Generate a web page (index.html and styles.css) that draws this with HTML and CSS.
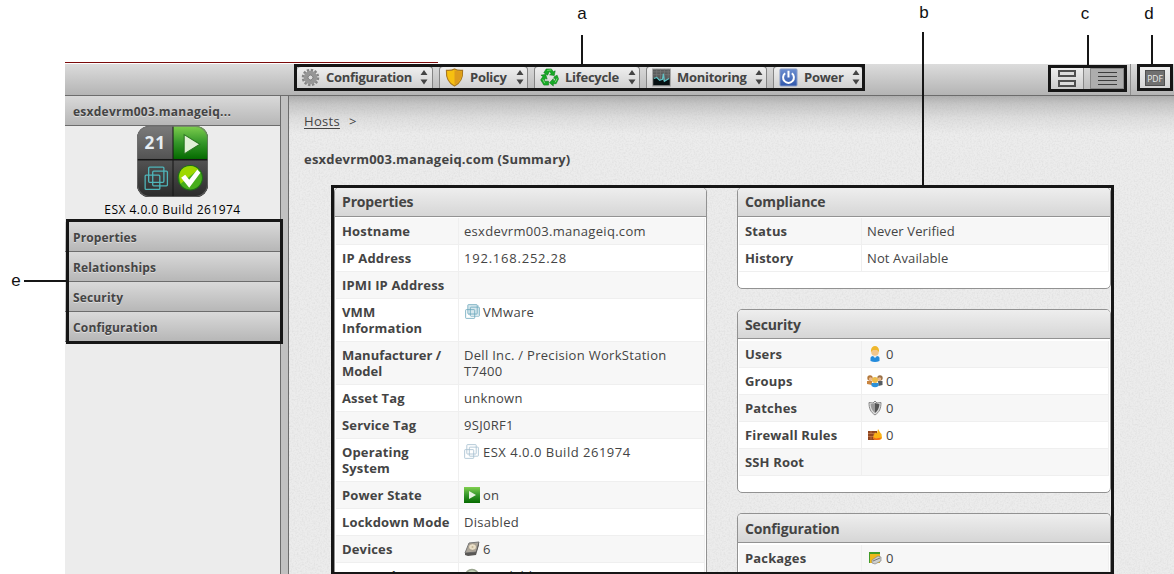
FILE: index.html
```html
<!DOCTYPE html>
<html lang="en">
<head>
<meta charset="utf-8">
<title>Host summary</title>
<link rel="stylesheet" href="styles.css">
</head>
<body>
<svg width="0" height="0" class="defs" aria-hidden="true">
  <defs>
    <linearGradient id="green" x1="0" y1="0" x2="0" y2="1"><stop offset="0" stop-color="#7fcf4e"/><stop offset=".5" stop-color="#35972a"/><stop offset="1" stop-color="#056b00"/></linearGradient>
    <linearGradient id="grey" x1="0" y1="0" x2="0" y2="1"><stop offset="0" stop-color="#7b7b7b"/><stop offset="1" stop-color="#535353"/></linearGradient>
    <linearGradient id="dark" x1="0" y1="0" x2="0" y2="1"><stop offset="0" stop-color="#525252"/><stop offset="1" stop-color="#2b2b2b"/></linearGradient>
    <linearGradient id="blue" x1="0" y1="0" x2="0" y2="1"><stop offset="0" stop-color="#6d8fd0"/><stop offset="1" stop-color="#2f57ac"/></linearGradient>
    <filter id="grain" x="0" y="0" width="100%" height="100%"><feTurbulence type="fractalNoise" baseFrequency=".6" numOctaves="2" seed="4"/><feColorMatrix values="0 0 0 0 .3  0 0 0 0 .3  0 0 0 0 .3  .9 0 0 0 -.36"/></filter>
    <clipPath id="quad"><rect width="70" height="70" rx="12"/></clipPath>
    <symbol id="boxes" viewBox="0 0 24 24"><g fill="none" stroke="currentColor" stroke-width="1.300"><rect x="1" y="9" width="14.500" height="14" rx="1"/><rect x="8.500" y="5" width="14.500" height="14.500" rx="1"/><rect x="4.500" y="1" width="15" height="15" rx="1"/></g></symbol>
    <symbol id="sort" viewBox="0 0 8 16"><path d="M4 1l3.500 5h-7zM4 15.500L.5 10.500h7z" fill="#444"/></symbol>
  </defs>
</svg>

<div class="app">
  <div class="redline"></div>
  <header class="topbar">
    <nav class="menus">
      <button class="menu m1"><svg class="ico" viewBox="0 0 20 20"><circle cx="10" cy="10" r="7.800" fill="none" stroke="#858585" stroke-width="2.800" stroke-dasharray="2.500 1.584"/><circle cx="10" cy="10" r="4.900" fill="none" stroke="#969696" stroke-width="4.400"/><circle cx="10" cy="10" r="2.600" fill="#ddd" stroke="#777"/></svg><span>Configuration</span><svg class="sort"><use href="#sort"/></svg></button>
      <button class="menu m2"><svg class="ico" viewBox="0 0 20 20"><path d="M10 1c2.500 1.500 5.500 1.700 8.500 1.500C19 10 16 16 10 19 4 16 1 10 1.500 2.500 4.500 2.700 7.500 2.500 10 1z" fill="#f6c010" stroke="#a9781f" stroke-width="1.200"/><path d="M10 2c2 1.200 5 1.600 7.700 1.500C18 9 16 15 10 18z" fill="#dd9c1c"/></svg><span>Policy</span><svg class="sort"><use href="#sort"/></svg></button>
      <button class="menu m3"><svg class="ico" viewBox="0 0 20 20"><g fill="#16aa26" stroke="#087a16" stroke-width=".6"><path d="M6.500 1H12l2 3 2-1-1 5-5-.8 1.700-1.200L10 3.500 8 7.500 4 5z"/><path d="M14.500 9.500l3.500-2 1.500 4-2.500 5h-3V19L10 15.500l4-4.300v2.300h1.500l.6-1.200z"/><path d="M1 7.500l5-.8 1.500 5-2-.8-1.200 3H9V18H4L.7 12.500 3 9z"/></g><path d="M7.500 2.500L12 2M3 12l2 4M16 15l2-4" stroke="#7fdc77" fill="none"/></svg><span>Lifecycle</span><svg class="sort"><use href="#sort"/></svg></button>
      <button class="menu m4"><svg class="ico" viewBox="0 0 20 20"><rect x=".5" y="1" width="19" height="18" fill="#5a5c5c" stroke="#aaa"/><path d="M1 7h18M1 4h18M5 1v12M9 1v12M13 1v12M17 1v12" stroke="#777" stroke-width=".8"/><path d="M1.500 11l3-1 3 3 3-1 2 2 6-3v7h-17z" fill="#071012"/><path d="M2 11l3-1 3 3 3-1 1-6 1 8 5-3" fill="none" stroke="#5fc3c7" stroke-width="1.200"/></svg><span>Monitoring</span><svg class="sort"><use href="#sort"/></svg></button>
      <button class="menu m5"><svg class="ico" viewBox="0 0 20 20"><rect x="1" y="1" width="18" height="18" rx="1" fill="url(#blue)" stroke="#8fa2ca"/><path d="M6.500 5.500a5.700 5.700 0 1 0 7 0M10 3v7" fill="none" stroke="#fff" stroke-width="2.100"/></svg><span>Power</span><svg class="sort"><use href="#sort"/></svg></button>
    </nav>
    <div class="views">
      <div class="view"><svg width="18" height="17" viewBox="0 0 18 17"><g fill="#ddd" stroke="#505050" stroke-width="2"><rect x="1" y="1" width="16" height="5"/><rect x="1" y="11" width="16" height="5"/></g></svg></div>
      <div class="view on"><svg width="19" height="13" viewBox="0 0 19 13"><path d="M0 .5h19M0 4.500h19M0 8.500h19M0 12.500h19" stroke="#3d3d3d"/></svg></div>
    </div>
    <div class="pdf"><span>PDF</span></div>
  </header>

  <div class="body">
    <aside class="sidebar">
      <h2 class="bar">esxdevrm003.manageiq...</h2>
      <div class="host">
        <svg class="quad" viewBox="0 0 70 70"><g clip-path="url(#quad)"><rect width="70" height="70" fill="#151515"/><rect width="35" height="32.500" fill="url(#grey)"/><rect x="36" width="34" height="32.500" fill="url(#green)"/><rect y="34" width="35" height="36" fill="url(#dark)"/><rect x="36" y="34" width="34" height="36" fill="url(#dark)"/><path d="M46.500 8.500L62 18 46.500 27.500z" fill="#e1f0d7" stroke="#28751e"/></g><rect x=".5" y=".5" width="69" height="69" rx="12" fill="none" stroke="#707070" stroke-opacity=".7"/><text x="18" y="22.500" text-anchor="middle" class="count">21</text><g class="cyan"><use href="#boxes" x="7" y="39.500" width="24" height="24"/></g><circle cx="52.500" cy="51" r="12" fill="#46ad1c" stroke="#1d7014"/><path d="M41.500 49a11 11 0 0 1 19-6L43 57z" fill="#9ed800"/><path d="M43.500 51l4-3 4 5 8-10 3 3-11 15z" fill="#fff"/></svg>
        <p class="build">ESX 4.0.0 Build 261974</p>
      </div>
      <ul class="sections">
        <li class="bar">Properties</li>
        <li class="bar">Relationships</li>
        <li class="bar">Security</li>
        <li class="bar">Configuration</li>
      </ul>
    </aside>
    <div class="splitter"></div>
    <main class="main">
      <svg class="texture"><rect width="100%" height="100%" filter="url(#grain)"/></svg>
      <p class="crumb"><a>Hosts</a><span>&gt;</span></p>
      <h1 class="title">esxdevrm003.manageiq.com (Summary)</h1>
      <div class="columns">
        <section class="panel first">
          <h3>Properties</h3>
          <dl>
            <div><dt>Hostname</dt><dd>esxdevrm003.manageiq.com</dd></div>
            <div><dt>IP Address</dt><dd class="num">192.168.252.28</dd></div>
            <div><dt>IPMI IP Address</dt><dd></dd></div>
            <div><dt>VMM<br>Information</dt><dd class="pic"><svg class="i teal" viewBox="0 0 16 16"><rect x="4" y="1" width="11" height="10" fill="#d7e8ee"/><use href="#boxes" x="1" y="0" width="15" height="15"/></svg>VMware</dd></div>
            <div><dt class="tight">Manufacturer /<br>Model</dt><dd>Dell Inc. / Precision WorkStation<br>T7400</dd></div>
            <div><dt>Asset Tag</dt><dd>unknown</dd></div>
            <div><dt>Service Tag</dt><dd>9SJ0RF1</dd></div>
            <div><dt>Operating<br>System</dt><dd class="pic build-no"><svg class="i pale" viewBox="0 0 16 16"><use href="#boxes" x="0" y="0" width="15" height="15"/></svg>ESX 4.0.0 Build 261974</dd></div>
            <div><dt>Power State</dt><dd class="pic"><svg class="i" viewBox="0 0 16 16"><rect width="16" height="16" fill="url(#green)"/><path d="M5 4l7 4-7 4z" fill="#e6f3df"/></svg>on</dd></div>
            <div><dt>Lockdown Mode</dt><dd>Disabled</dd></div>
            <div><dt>Devices</dt><dd class="pic"><svg class="i" viewBox="0 0 16 16"><path d="M5 2l10-1-3 10-11 1z" fill="#ada69b" stroke="#777"/><path d="M1 12l11-1 3-10v3l-3 10-8 1-3-1z" fill="#595755"/><ellipse cx="8.500" cy="6" rx="4" ry="3.300" fill="#eadfc8" stroke="#948b7d" stroke-width=".7"/><circle cx="8.500" cy="6" r="1" fill="#c5b798"/></svg>6</dd></div>
            <div><dt>Network</dt><dd class="pic"><svg class="i" viewBox="0 0 16 16"><circle cx="8" cy="8" r="6.500" fill="#c5d2b8" stroke="#9aa58f" stroke-width="1.500"/></svg>Available</dd></div>
          </dl>
        </section>
        <div class="stack">
          <section class="panel first">
            <h3>Compliance</h3>
            <dl>
              <div><dt>Status</dt><dd class="tight">Never Verified</dd></div>
              <div><dt>History</dt><dd class="tight">Not Available</dd></div>
            </dl>
          </section>
          <section class="panel">
            <h3>Security</h3>
            <dl>
              <div><dt>Users</dt><dd class="pic"><svg class="i" viewBox="0 0 16 16"><path d="M3.500 15v-3c0-3 9-3 9 0v3q-4.500 2-9 0z" fill="#238bdc"/><path d="M5 9l3 3 3-3z" fill="#eee"/><circle cx="8" cy="6" r="3.800" fill="#f2c68c"/><path d="M4 6c-1-8 9-8 8 0l-2-2H6z" fill="#efb72c"/></svg>0</dd></div>
              <div><dt>Groups</dt><dd class="pic"><svg class="i" viewBox="0 0 16 16"><path d="M0 11V8h5v4z" fill="#c98540"/><path d="M11 8h4.500v4l-4 1z" fill="#555c63"/><circle cx="3" cy="5" r="2.700" fill="#b5793b"/><circle cx="13" cy="5" r="2.700" fill="#9b7249"/><circle cx="3.500" cy="6" r="1.700" fill="#eab88b"/><circle cx="12.500" cy="6" r="1.700" fill="#eab88b"/><path d="M4.500 13v-3h7v3q-3.500 2.500-7 0z" fill="#2b91da"/><circle cx="8" cy="7" r="3" fill="#edbc4b"/></svg>0</dd></div>
              <div><dt>Patches</dt><dd class="pic"><svg class="i" viewBox="0 0 16 16"><path d="M8 1l2 2 4-.5c0 6-1.500 9.500-6 12.500-4.500-3-6-6.500-6-12.500L6 3z" fill="#dedede" stroke="#888"/><path d="M8 3l4.500 1.300C12 8 11 11 8 13z" fill="#555"/><path d="M8 3L3.500 4.300C4 8 5 11 8 13z" fill="#999"/></svg>0</dd></div>
              <div><dt>Firewall Rules</dt><dd class="pic"><svg class="i" viewBox="0 0 16 16"><path d="M1 4h9v9H1z" fill="#914721"/><path d="M1 6.500h9M1 9.500h9M4 4v2.500M7 6.500v3M4 9.500v3" stroke="#cc8250" stroke-width=".7"/><path d="M7 12.500c-2-2 0-4 1-7l2 1 1-4.500 2.500 4 1 1 .5 4c0 1-2 2-4 2z" fill="#fbb315"/><path d="M6 10l3 1.500 5.500-1q-1 2.500-4.500 2.500-4 0-4-3z" fill="#f2681a"/></svg>0</dd></div>
              <div><dt>SSH Root</dt><dd></dd></div>
            </dl>
          </section>
          <section class="panel open">
            <h3>Configuration</h3>
            <dl>
              <div><dt>Packages</dt><dd class="pic"><svg class="i" viewBox="0 0 16 16"><path d="M2 2h11v11H3z" fill="#efb91b"/><path d="M2 2h11v2H3v9H2z" fill="#429b28"/><path d="M5 10l6-4 3 1v4l-6 3-3-1z" fill="#d0d0cc" stroke="#888" stroke-width=".7"/><path d="M6 11l7-3" stroke="#777"/></svg>0</dd></div>
            </dl>
          </section>
        </div>
      </div>
    </main>
  </div>
</div>

<div class="frame fa"></div><div class="frame fb"></div><div class="frame fc"></div><div class="frame fd"></div><div class="frame fe"></div>
<div class="lead la"></div><div class="lead lb"></div><div class="lead lc"></div><div class="lead ld"></div><div class="lead le"></div>
<div class="tag ta">a</div><div class="tag tb">b</div><div class="tag tc">c</div><div class="tag td">d</div><div class="tag te">e</div>
</body>
</html>
```
FILE: styles.css
```css
* { box-sizing: border-box; margin: 0; padding: 0; }
html { overflow: hidden; }
body { position: relative; width: 1174px; height: 574px; overflow: hidden; background: #fff; color: #444; font: 13px/16px "Open Sans", "Noto Sans", sans-serif; }
.defs { position: absolute; }
.app { padding: 62px 0 0 65px; }
.redline { width: 373px; height: 2px; border-top: 1px solid #7a0a0a; }

.topbar { display: flex; height: 32px; padding-left: 232px; border-bottom: 1px solid #6c6c6c; background: linear-gradient(#dcdcdc, #b4b4b4); }
.menus { display: flex; gap: 6px; padding-top: 2px; height: 25px; width: 566px; }
.menu { display: flex; align-items: center; height: 23px; border: 1px solid #858585; border-width: 1px 1px 0; border-radius: 4px 4px 0 0; background: linear-gradient(#efefef, #cfcfcf); color: #444; font: bold 13px/20px "Open Sans", sans-serif; letter-spacing: -.28px; padding: 0 3px 2px 5px; }
.menu span { flex: 1; text-align: left; white-space: nowrap; }
.ico { width: 19px; height: 19px; margin-right: 6px; flex: none; }
.sort { width: 8px; height: 16px; flex: none; }
.m1 { width: 136px; padding-left: 4px; padding-right: 4px; border-left: 0; }
.m2 { width: 89px; }
.m3 { width: 106px; }
.m4 { width: 121px; }
.m5 { width: 90px; padding-right: 2px; }
.views { display: flex; margin-left: 188px; padding: 4px 0 0; width: 80px; height: 31px; border-right: 1px solid #8d8d8d; }
.view { display: flex; align-items: center; justify-content: center; width: 33px; height: 21px; background: linear-gradient(#eee, #ccc); border-right: 1px solid #888; }
.view.on { width: 34px; margin-left: 6px; background: #adadad; border: 1px solid #888; }
.pdf { display: flex; align-items: center; justify-content: center; width: 30px; height: 21px; margin: 3px 0 0 9px; background: linear-gradient(#eee, #d5d5d5); }
.pdf span { width: 20px; height: 16px; background: #707070; border: 1px solid #505050; color: #eee; font: 8.500px/15px "Open Sans", sans-serif; text-align: center; }

.body { display: flex; height: 478px; }
.sidebar { width: 215px; background: #ececec; }
.bar { height: 30px; padding: 0 8px; border-bottom: 1px solid #6c6c6c; background: linear-gradient(#d9d9d9, #b7b7b7); color: #444; font: bold 12px/31px "Open Sans", sans-serif; text-shadow: 0 1px 0 #ddd; list-style: none; letter-spacing: .15px; }
h2.bar { letter-spacing: .25px; }
.host { display: flex; flex-direction: column; align-items: center; height: 96px; }
.quad { width: 71px; height: 71px; }
.count { font: bold 17px "Open Sans", sans-serif; fill: #e6edf2; letter-spacing: .8px; }
.cyan { color: #4fb5b9; }
.build { margin-top: 5px; color: #000; font-size: 12px; letter-spacing: .47px; white-space: nowrap; }
.splitter { width: 9px; background: #c1c1c1; border: 1px solid #6c6c6c; border-width: 0 1px; }

.main { position: relative; flex: 1; overflow: hidden; padding: 17px 0 0 15px; background: linear-gradient(#aeaeae, #c6c6c6 8px, #dedede 22px, #ececec 38px, #ececec); }
.texture { position: absolute; left: 0; top: 0; width: 100%; height: 100%; opacity: .3; }
.main > :not(.texture) { position: relative; }
.crumb { display: flex; gap: 9px; height: 16px; letter-spacing: .3px; }
.crumb a { text-decoration: underline; text-underline-offset: 2px; }
.title { margin-top: 22px; font-size: 13px; line-height: 16px; height: 16px; letter-spacing: .2px; }
.columns { display: flex; gap: 30px; margin: 20px 0 0 30px; }
.panel { width: 373px; border: 1px solid #929292; border-radius: 5px; background: #fff; padding-bottom: 16px; }
.stack { display: flex; flex-direction: column; gap: 20px; }
.stack .panel { width: 374px; }
.panel h3 { height: 29px; padding-left: 7px; border-bottom: 1px solid #929292; border-radius: 4px 4px 0 0; background: linear-gradient(#eee, #d6d6d6); font: bold 14px/29px "Open Sans", sans-serif; letter-spacing: -.15px; }
.panel.first h3 { line-height: 27px; }
.panel dl { padding: 2px 1px 0; }
.panel.first dl { padding-top: 1px; }
.panel dl > div { display: grid; grid-template-columns: 123px 1fr; border-bottom: 1px solid #efefef; border-right: 1px solid #efefef; min-height: 27px; white-space: nowrap; }
.panel dl > div:nth-child(odd) { background: #f7f7f7; }
.panel dt { padding: 5px 0 5px 6px; border-right: 1px solid #efefef; font-weight: bold; letter-spacing: .15px; }
.panel dt.tight { letter-spacing: 0; }
.panel dd { padding: 5px 0 5px 5px; letter-spacing: .3px; }
.panel dd.tight { letter-spacing: .12px; }
.panel dd.num { letter-spacing: .78px; }
.panel dd.build-no { letter-spacing: .5px; }
.panel .pic { display: flex; gap: 3px; }
.panel.open { padding-bottom: 5px; border-bottom: 0; border-radius: 5px 5px 0 0; }
.i { width: 16px; height: 16px; flex: none; }
.teal { color: #6ba8bc; }
.pale { color: #a5bfd0; }

/* callouts laid over the window */
.frame { position: absolute; border: 3px solid #161616; }
.fa { left: 294px; top: 64px; width: 571px; height: 27px; }
.fb { left: 331px; top: 185px; width: 783px; height: 389px; border-bottom-width: 2px; }
.fc { left: 1048px; top: 65px; width: 79px; height: 27px; }
.fd { left: 1137px; top: 64px; width: 36px; height: 27px; }
.fe { left: 66px; top: 219px; width: 217px; height: 125px; }
.lead { position: absolute; width: 2px; background: #161616; }
.la { left: 581px; top: 35px; height: 30px; }
.lb { left: 922px; top: 32px; height: 154px; }
.lc { left: 1087px; top: 35px; height: 31px; }
.ld { left: 1151px; top: 35px; height: 30px; }
.le { left: 24px; top: 280px; width: 43px; height: 2px; }
.tag { position: absolute; width: 20px; text-align: center; color: #111; font: 17px/20px "Liberation Sans", sans-serif; }
.ta { left: 572px; top: 4px; }
.tb { left: 914px; top: 3px; }
.tc { left: 1075px; top: 4px; }
.td { left: 1139px; top: 4px; }
.te { left: 6px; top: 271px; }
```
